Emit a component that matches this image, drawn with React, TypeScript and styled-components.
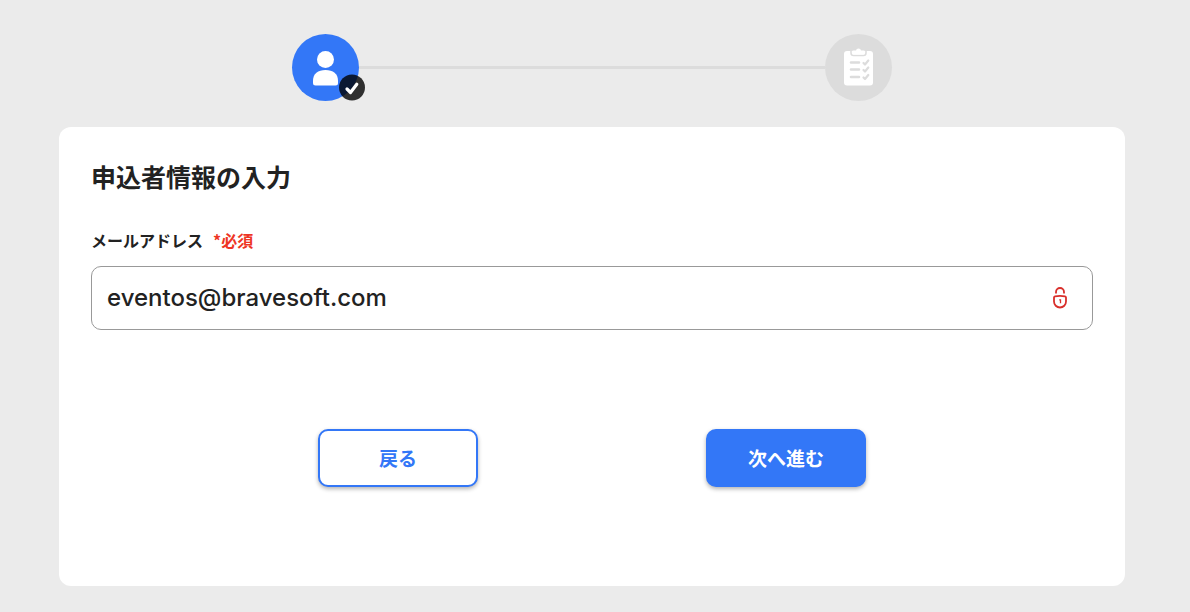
import React, { useState } from 'react';
import styled, { createGlobalStyle, css } from 'styled-components';

const blue = '#3377f7';

const GlobalStyle = createGlobalStyle`
  *, *::before, *::after { box-sizing: border-box; }
  body {
    margin: 0;
    background: #ebebeb;
    color: #222;
    font-family: "Noto Sans CJK JP", sans-serif;
  }
`;

const Page = styled.main`
  min-height: 100vh;
  padding: 34px 65px 26px 59px;
`;

const Stepper = styled.ol`
  display: flex;
  align-items: center;
  max-width: 600px;
  margin: 0 auto 26px;
  padding: 0;
  list-style: none;
`;

const Step = styled.li<{ $active?: boolean }>`
  position: relative;
  display: flex;
  flex: none;
  width: 67px;
  height: 67px;
  border-radius: 50%;
  background: ${({ $active }) => ($active ? blue : '#dcdcdc')};
`;

const Connector = styled.li`
  flex: 1;
  height: 3px;
  background: #dcdcdc;
`;

const StepIcon = styled.svg`
  width: 67px;
  height: 67px;
`;

const DoneBadge = styled.svg`
  position: absolute;
  right: -6px;
  bottom: 0;
  width: 26px;
  height: 27px;
`;

const Card = styled.form`
  min-height: 459px;
  padding: 32px;
  border-radius: 12px;
  background: #fff;
`;

const Title = styled.h1`
  margin: 0 0 34px;
  font-size: 25px;
  line-height: 34px;
  font-weight: 700;
`;

const FieldHeader = styled.div`
  display: flex;
  gap: 10px;
  margin-bottom: 13px;
  font-size: 16px;
  line-height: 26px;
  font-weight: 700;
`;

const Required = styled.span`
  color: #ee3524;
`;

const InputBox = styled.div`
  display: flex;
  align-items: center;
  height: 64px;
  padding: 0 24px 0 15px;
  border: 1px solid #999;
  border-radius: 10px;
`;

const EmailInput = styled.input`
  flex: 1;
  min-width: 0;
  padding: 0;
  border: 0;
  outline: 0;
  background: none;
  color: #222;
  font: 500 24px/32px Inter, "Noto Sans CJK JP", sans-serif;
`;

const LockIcon = styled.svg`
  flex: none;
  width: 16px;
  height: 22px;
`;

const Actions = styled.div`
  display: flex;
  justify-content: center;
  gap: 228px;
  margin-top: 99px;
`;

const Button = styled.button<{ $primary?: boolean }>`
  width: 160px;
  height: 58px;
  padding: 0;
  border: 2px solid ${blue};
  border-radius: 10px;
  box-shadow: 0 2px 4px rgba(0, 0, 0, 0.3);
  font: 700 19px/28px "Noto Sans CJK JP", sans-serif;
  cursor: pointer;
  ${({ $primary }) =>
    $primary
      ? css`background: ${blue}; color: #fff;`
      : css`background: #fff; color: ${blue};`}
`;

export default function App() {
  const [email, setEmail] = useState('eventos@bravesoft.com');

  return (
    <>
      <GlobalStyle />
      <Page>
        <Stepper>
          <Step $active>
            <StepIcon viewBox="0 0 67 67" fill="#fff" aria-hidden="true">
              <circle cx="33.5" cy="25.5" r="8.5" />
              <path d="M21 46.500C21 40 26 36 33.500 36S46 40 46 46.500V49Q46 51.500 43.500 51.500H23.500Q21 51.500 21 49Z" />
            </StepIcon>
            <DoneBadge viewBox="0 0 26 27" aria-hidden="true">
              <circle cx="13" cy="13.500" r="13" fill="#000" fillOpacity="0.8" />
              <path d="M8 15L11.500 18.500L17.800 10.200" fill="none" stroke="#fff" strokeWidth="3.200" strokeLinecap="round" strokeLinejoin="round" />
            </DoneBadge>
          </Step>
          <Connector aria-hidden="true" />
          <Step>
            <StepIcon viewBox="0 0 67 67" aria-hidden="true">
              <rect x="19" y="17" width="29" height="34.500" rx="3" fill="#fff" />
              <path d="M26 16V19Q26 21.500 28.500 21.500H38.500Q41 21.500 41 19V16" fill="none" stroke="#dcdcdc" strokeWidth="1.500" />
              <path d="M27 17.500Q27 16.500 28.500 16.500H31Q31.300 14.500 33.500 14.500T36 16.500H38.500Q40 16.500 40 17.500V19Q40 20.500 38.500 20.500H28.500Q27 20.500 27 19Z" fill="#fff" />
              <g fill="none" stroke="#dcdcdc" strokeWidth="2.200" strokeLinecap="round" strokeLinejoin="round">
                <path d="M26 28.500H34M26 35.500H34M26 43H34" strokeWidth="2.600" />
                <path d="M38.500 29L40 30.500L43.300 26.500M38.500 36L40 37.500L43.300 33.500M38.500 43.500L40 45L43.300 41" />
              </g>
            </StepIcon>
          </Step>
        </Stepper>
        <Card onSubmit={(e) => e.preventDefault()}>
          <Title>申込者情報の入力</Title>
          <FieldHeader>
            <label htmlFor="email">メールアドレス</label>
            <Required>*必須</Required>
          </FieldHeader>
          <InputBox>
            <EmailInput id="email" type="email" required value={email} onChange={(e) => setEmail(e.target.value)} />
            <LockIcon viewBox="0 0 16 22" fill="none" stroke="#d92f2b" strokeWidth="1.800" aria-hidden="true">
              <path d="M4 6.500V5A4 4 0 0 1 12 5V6.500" />
              <path d="M2 10.500Q2 9.500 3 9.300Q8 8.300 13 9.300Q14 9.500 14 10.500V14.500A6 6 0 0 1 2 14.500Z" />
              <path d="M7.200 12.800H8.500V16.300" strokeWidth="1.300" />
            </LockIcon>
          </InputBox>
          <Actions>
            <Button type="button">戻る</Button>
            <Button type="submit" $primary>次へ進む</Button>
          </Actions>
        </Card>
      </Page>
    </>
  );
}
